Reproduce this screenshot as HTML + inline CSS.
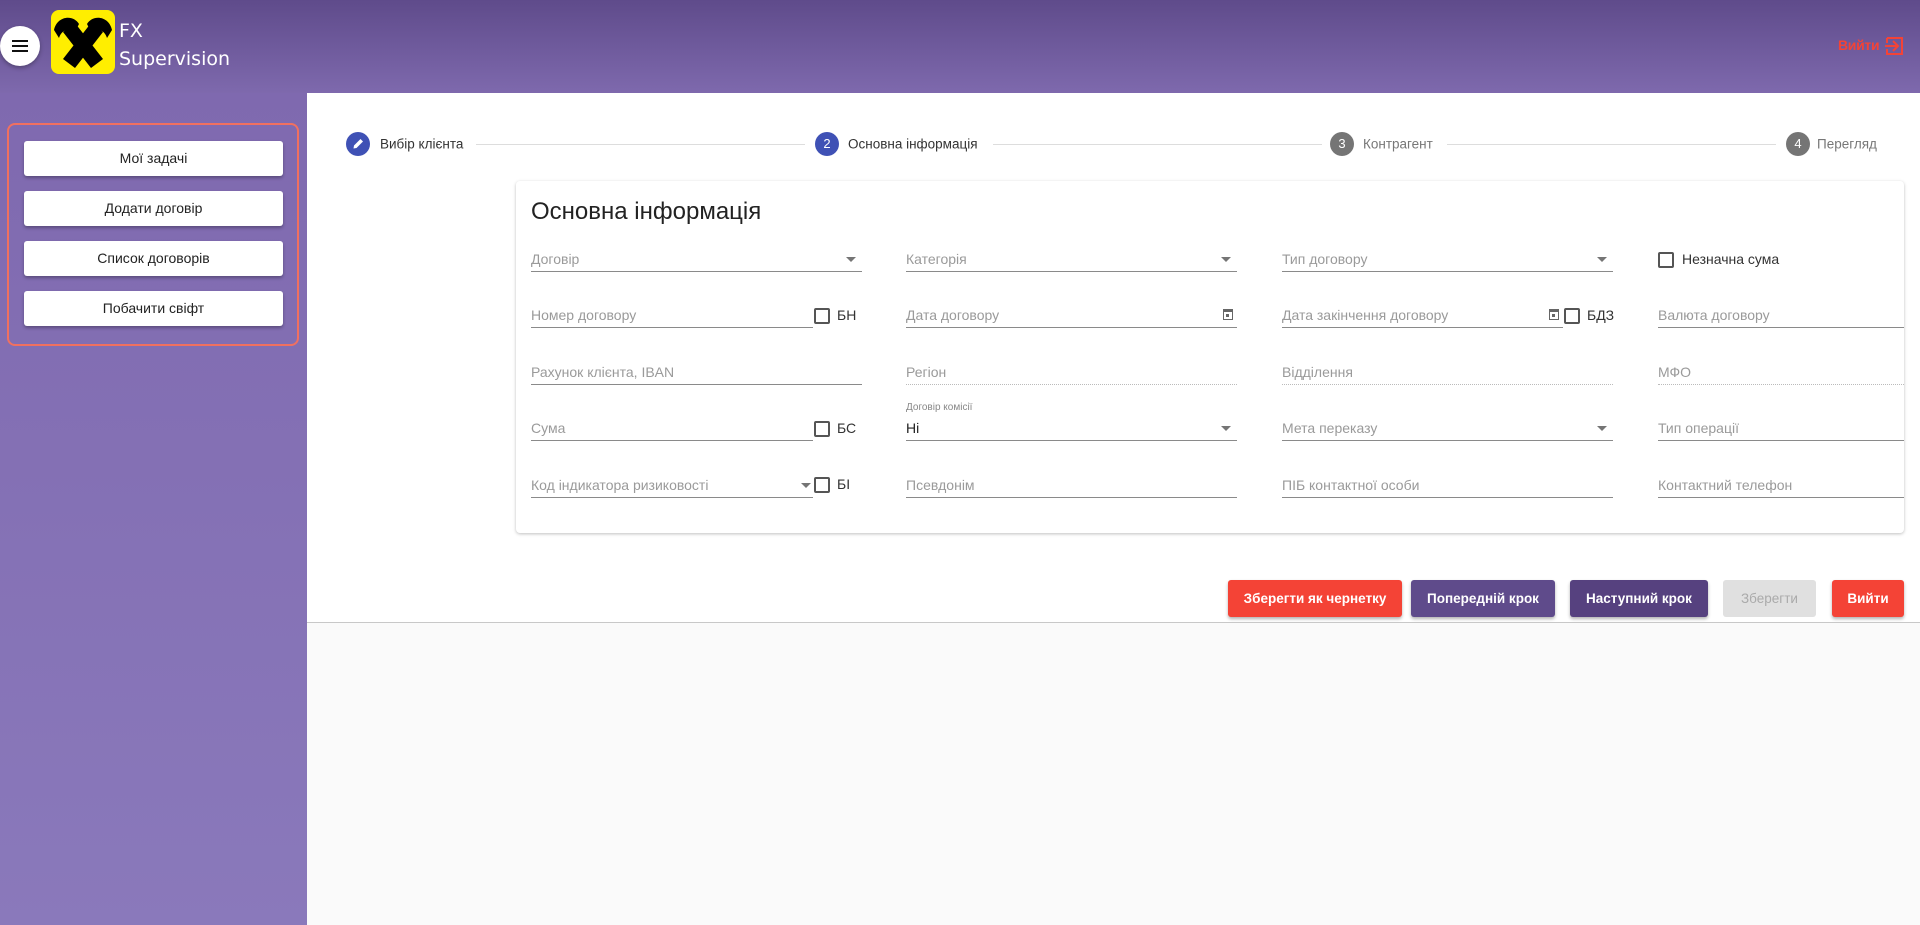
<!DOCTYPE html>
<html><head><meta charset="utf-8">
<style>
*{box-sizing:border-box;margin:0;padding:0}
body{width:1920px;height:925px;overflow:hidden;font-family:"Liberation Sans",sans-serif;background:#fafafa;position:relative}
.hdr{position:absolute;left:0;top:0;width:1920px;height:93px;background:linear-gradient(#5f4b8b,#7e69ad)}
.side{position:absolute;left:0;top:93px;width:307px;height:832px;background:linear-gradient(#7f69af,#8a79bb)}
.main{position:absolute;left:307px;top:93px;width:1613px;height:530px;background:#fff;border-bottom:1px solid #c8c8c8}
.ham{position:absolute;left:0;top:26px;width:40px;height:40px;border-radius:50%;background:#fff;box-shadow:0 2px 4px rgba(0,0,0,.3)}
.ham i{position:absolute;left:12px;width:16px;height:2px;background:#111}
.logo{position:absolute;left:51px;top:10px;width:64px;height:64px;border-radius:8px;background:#ffee00;overflow:hidden}
.fx{position:absolute;left:119px;color:#fff;font-family:"DejaVu Sans",sans-serif;font-size:19px}
.exit{position:absolute;left:1838px;top:37px;color:#f44336;font-size:14px;font-weight:bold;letter-spacing:-0.3px}
.obox{position:absolute;left:7px;top:123px;width:292px;height:223px;border:2px solid #f07060;border-radius:8px}
.sb{position:absolute;left:24px;width:259px;height:35px;background:#fff;border-radius:3px;box-shadow:0 2px 3px rgba(0,0,0,.3);text-align:center;line-height:35px;font-size:14px;color:#222}
.st{position:absolute;top:144px;font-size:13.5px;color:#333;transform:translateY(-50%)}
.sc{position:absolute;top:132px;width:24px;height:24px;border-radius:50%;color:#fff;font-size:13px;text-align:center;line-height:24px}
.sl{position:absolute;top:144px;height:1px;background:#ddd}
.card{position:absolute;left:516px;top:181px;width:1388px;height:352px;background:#fff;border-radius:4px;box-shadow:0 1px 3px rgba(0,0,0,.25)}
.title{position:absolute;left:531px;top:198px;font-size:24px;color:#222}
.f{position:absolute;height:26px;border-bottom:1px solid #8a8a8a;font-size:14px;color:#9a9a9a;line-height:26px;white-space:nowrap}
.f.d{border-bottom:1px dotted #bbb}
.arr{position:absolute;right:6px;top:11px;border-left:5px solid transparent;border-right:5px solid transparent;border-top:5px solid #757575}
.cal{position:absolute;right:4px;top:7px;width:10px;height:11px;border:1.5px solid #666;border-top-width:3px}
.cal:after{content:"";position:absolute;left:2px;top:2px;width:3px;height:3px;background:#666}
.cb{position:absolute;width:16px;height:16px;border:2px solid #555;border-radius:2px}
.cl{position:absolute;font-size:14px;color:#333}
.b{position:absolute;top:580px;height:37px;border-radius:3px;color:#fff;font-weight:bold;font-size:13.5px;text-align:center;line-height:37px;box-shadow:0 2px 3px rgba(0,0,0,.3)}
</style></head><body>
<div class="hdr"></div>
<div class="side"></div>
<div class="main"></div>
<div class="ham"><i style="top:14px"></i><i style="top:19px"></i><i style="top:24px"></i></div>
<div class="logo"><svg width="64" height="64" viewBox="0 0 64 64">
<path d="M12 22 L40 58 L52 49 L24 13 Z" fill="#000"/>
<path d="M52 22 L24 58 L12 49 L40 13 Z" fill="#000"/>
<path d="M3 20 C6 6 22 4 28 14 L23 24 L19 21 C14 19 10 22 8 28 Z" fill="#000"/>
<path d="M61 20 C58 6 42 4 36 14 L41 24 L45 21 C50 19 54 22 56 28 Z" fill="#000"/>
</svg></div>
<div class="fx" style="top:20px">FX</div>
<div class="fx" style="top:48px">Supervision</div>
<div class="exit">Вийти</div>
<svg style="position:absolute;left:1884px;top:36px" width="20" height="20" viewBox="0 0 20 20"><path d="M3 2 H18 V18 H3 V13 M3 7 V2" fill="none" stroke="#f44336" stroke-width="2"/><path d="M1 10 H14 M9 5 L14 10 L9 15" fill="none" stroke="#f44336" stroke-width="2"/></svg>
<div class="obox"></div>
<div class="sb" style="top:141px">Мої задачі</div>
<div class="sb" style="top:191px">Додати договір</div>
<div class="sb" style="top:241px">Список договорів</div>
<div class="sb" style="top:291px">Побачити свіфт</div>

<div class="sc" style="left:346px;background:#3f51b5"><svg width="24" height="24" viewBox="0 0 24 24"><path d="M7.5 16.5 L8 13.5 L14.5 7 L17 9.5 L10.5 16 Z" fill="#fff"/></svg></div>
<div class="st" style="left:380px">Вибір клієнта</div>
<div class="sl" style="left:476px;width:329px"></div>
<div class="sc" style="left:815px;background:#3f51b5">2</div>
<div class="st" style="left:848px">Основна інформація</div>
<div class="sl" style="left:993px;width:329px"></div>
<div class="sc" style="left:1330px;background:#757575">3</div>
<div class="st" style="left:1363px;color:#777">Контрагент</div>
<div class="sl" style="left:1447px;width:329px"></div>
<div class="sc" style="left:1786px;background:#757575">4</div>
<div class="st" style="left:1817px;color:#777">Перегляд</div>

<div class="card"></div>
<div class="title">Основна інформація</div>

<div class="f" style="left:531px;top:246px;width:331px">Договір<span class="arr"></span></div>
<div class="f" style="left:906px;top:246px;width:331px">Категорія<span class="arr"></span></div>
<div class="f" style="left:1282px;top:246px;width:331px">Тип договору<span class="arr"></span></div>
<div class="cb" style="left:1658px;top:252px"></div><div class="cl" style="left:1682px;top:251px">Незначна сума</div>

<div class="f" style="left:531px;top:302px;width:282px">Номер договору</div>
<div class="cb" style="left:814px;top:308px"></div><div class="cl" style="left:837px;top:307px">БН</div>
<div class="f" style="left:906px;top:302px;width:331px">Дата договору<span class="cal"></span></div>
<div class="f" style="left:1282px;top:302px;width:281px">Дата закінчення договору<span class="cal"></span></div>
<div class="cb" style="left:1564px;top:308px"></div><div class="cl" style="left:1587px;top:307px">БДЗ</div>
<div class="f" style="left:1658px;top:302px;width:246px">Валюта договору</div>

<div class="f" style="left:531px;top:359px;width:331px">Рахунок клієнта, IBAN</div>
<div class="f d" style="left:906px;top:359px;width:331px">Регіон</div>
<div class="f d" style="left:1282px;top:359px;width:331px">Відділення</div>
<div class="f d" style="left:1658px;top:359px;width:246px">МФО</div>

<div class="f" style="left:531px;top:415px;width:282px">Сума</div>
<div class="cb" style="left:814px;top:421px"></div><div class="cl" style="left:837px;top:420px">БС</div>
<div style="position:absolute;left:906px;top:402px;font-size:10px;color:#888">Договір комісії</div>
<div class="f" style="left:906px;top:415px;width:331px;color:#222">Ні<span class="arr"></span></div>
<div class="f" style="left:1282px;top:415px;width:331px">Мета переказу<span class="arr"></span></div>
<div class="f" style="left:1658px;top:415px;width:246px">Тип операції</div>

<div class="f" style="left:531px;top:472px;width:282px">Код індикатора ризиковості<span class="arr" style="right:2px"></span></div>
<div class="cb" style="left:814px;top:477px"></div><div class="cl" style="left:837px;top:476px">БІ</div>
<div class="f" style="left:906px;top:472px;width:331px">Псевдонім</div>
<div class="f" style="left:1282px;top:472px;width:331px">ПІБ контактної особи</div>
<div class="f" style="left:1658px;top:472px;width:246px">Контактний телефон</div>

<div class="b" style="left:1228px;width:174px;background:#f44336">Зберегти як чернетку</div>
<div class="b" style="left:1411px;width:144px;background:#5f4b8b">Попередній крок</div>
<div class="b" style="left:1570px;width:138px;background:#56417f">Наступний крок</div>
<div class="b" style="left:1723px;width:93px;background:#e0e0e0;color:#aaa;font-weight:normal;box-shadow:none">Зберегти</div>
<div class="b" style="left:1832px;width:72px;background:#f44336">Вийти</div>
</body></html>
